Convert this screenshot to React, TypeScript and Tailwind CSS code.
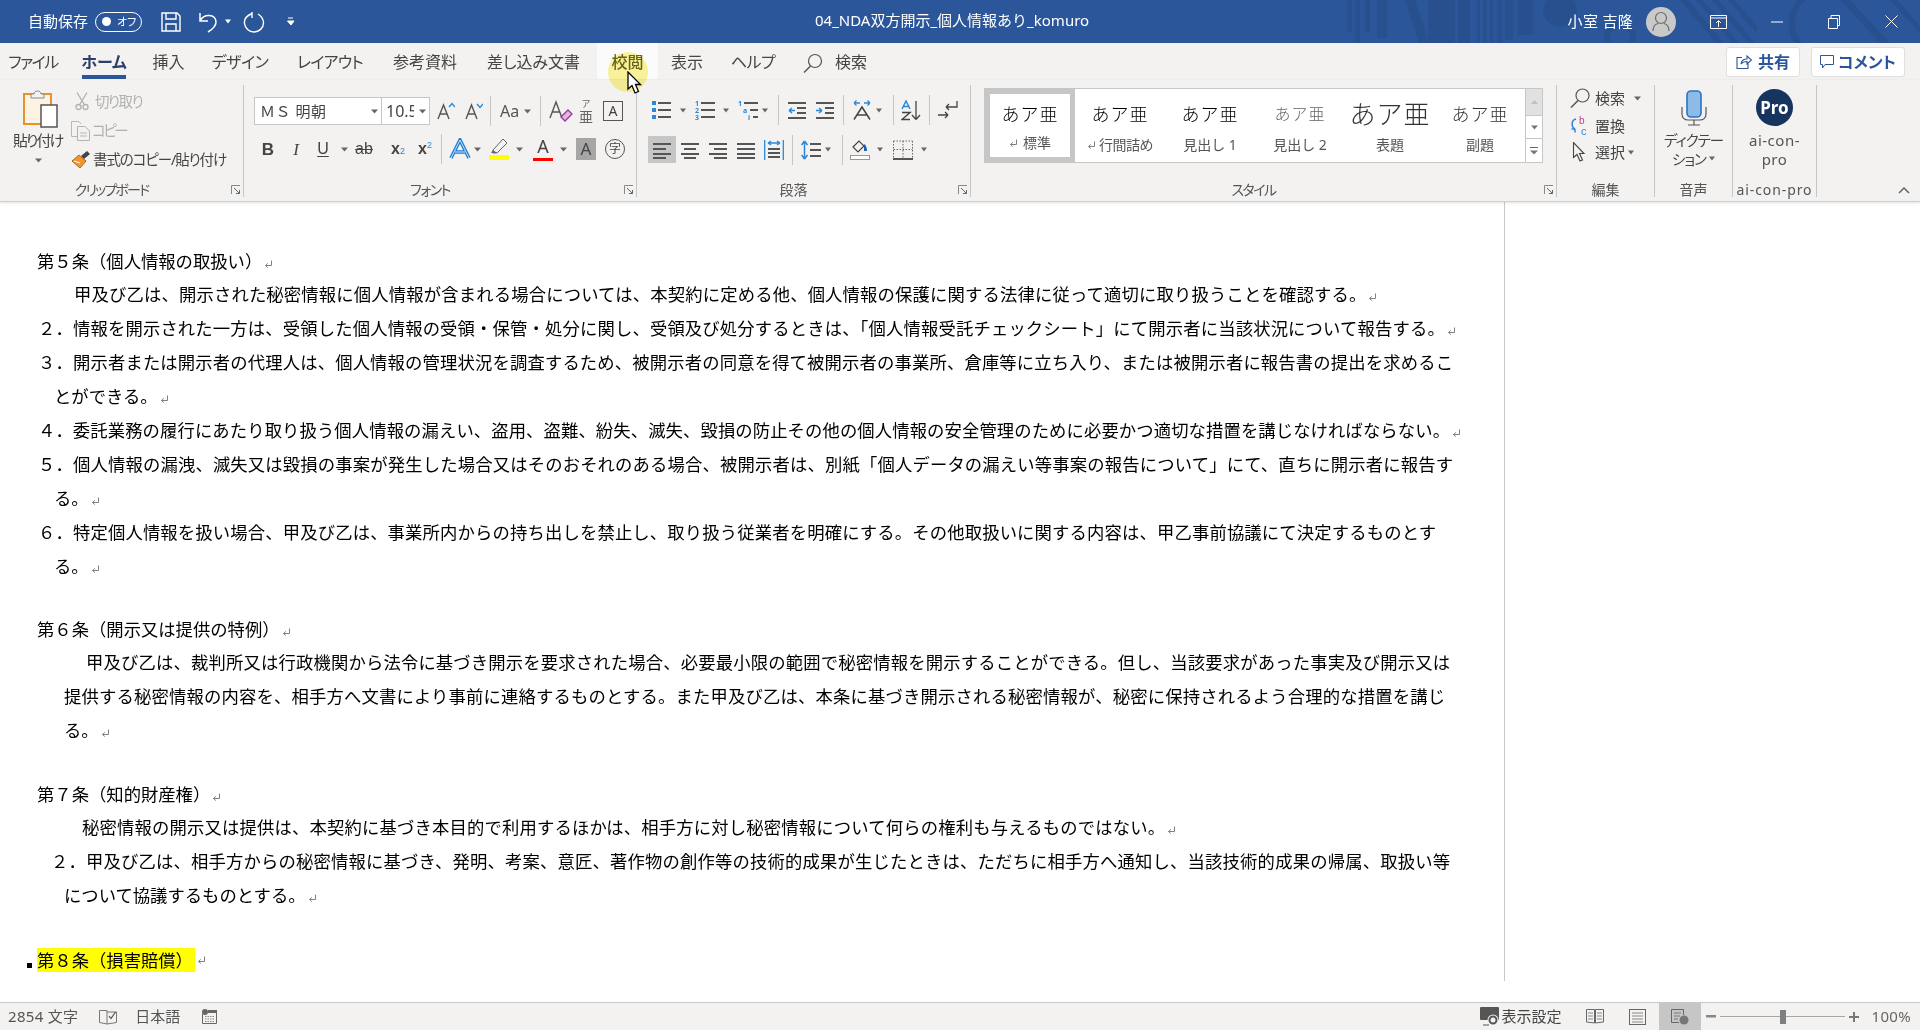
import React from "react";

const S = ({ w, h, children, className = "" }: { w: number; h: number; children?: React.ReactNode; className?: string }) => (
  <svg width={w} height={h} viewBox={`0 0 ${w} ${h}`} fill="none" className={"block shrink-0 " + className}>
    {children}
  </svg>
);
const Caret = ({ className = "", w = 8, c = "#666" }: { className?: string; w?: number; c?: string }) => (
  <S w={w} h={5} className={className}>
    <path d={`M0 0.5H${w}L${w / 2} 4.5Z`} fill={c} />
  </S>
);
const Sep = ({ className = "", h = 30 }: { className?: string; h?: number }) => (
  <S w={1} h={h} className={className}>
    <rect width={1} height={h} fill="#c8c6c4" />
  </S>
);
const Launcher = () => (
  <S w={10} h={10} className="self-center justify-self-end mr-[2px]">
    <path d="M0.5 9V0.5H9" stroke="#8a8886" />
    <path d="M3 3L8.5 8.5M5 8.5H8.5V5" stroke="#666" />
  </S>
);
const Label = ({ children, launcher, cls = "" }: { children: React.ReactNode; launcher?: boolean; cls?: string }) => (
  <div className="h-[15px] grid grid-cols-[1fr_auto_1fr] items-center text-[14px] leading-none text-[#555]">
    <span />
    <span className={"whitespace-nowrap " + (launcher ? "-translate-x-[10px] " : "") + cls}>{children}</span>
    {launcher ? <Launcher /> : <span />}
  </div>
);
const Mark = ({ className = "ml-[2px]" }: { className?: string }) => (
  <S w={9} h={9} className={"inline-block align-[-1px] " + className}>
    <path d="M7.5 0.5V5.5H1.5M1.5 5.5L3.8 3.4M1.5 5.5L3.8 7.6" stroke="#808080" strokeWidth="1" />
  </S>
);
const LineSet = ({ w, rows, c = "#555", t = 2 }: { w: number; rows: [number, number, number][]; c?: string; t?: number }) => (
  <S w={w} h={20}>
    {rows.map(([x, y, l], i) => (
      <rect key={i} x={x} y={y} width={l} height={t} fill={c} />
    ))}
  </S>
);

const Title = () => (
  <div className="relative h-[43px] shrink-0 bg-[#2b579a] flex items-center text-white overflow-hidden">
    <svg width={620} height={43} viewBox="0 0 620 43" className="absolute right-0 top-0" fill="#28508f">
      <rect x={47} width={5} height={32} />
      <rect x={55} width={5} height={43} />
      <rect x={65} width={5} height={32} />
      <rect x={77} width={10} height={38} />
      <path d="M105 0h10l14 43h-10z" />
      <rect x={128} width={27} height={43} />
      <rect x={158} width={12} height={43} />
      <rect x={177} width={3} height={43} />
      <rect x={183} width={4} height={43} />
      <rect x={190} width={3} height={43} />
      <rect x={197} width={5} height={43} />
      <rect x={205} width={8} height={40} />
      <rect x={218} width={15} height={35} />
      <circle cx={260} cy={10} r={17} />
      <circle cx={320} cy={37} r={13} stroke="#28508f" strokeWidth={6} fill="none" />
      <path d="M380 0h8l36 43h-8zM396 0h7l36 43h-7zM412 0h7l36 43h-7zM428 0h7l22 26v8z" />
      <path d="M494 43a36 36 0 0 1 4-43h8a30 30 0 0 0-4 43zM590 0h8l22 26v8zM540 0h10l40 43h-10z" />
    </svg>
    <span className="ml-[28px] text-[15px] leading-none whitespace-nowrap relative">自動保存</span>
    <div className="relative ml-[7px] w-[47px] h-[20px] rounded-full border border-white flex items-center">
      <span className="ml-[6px] w-[9px] h-[9px] rounded-full bg-white" />
      <span className="ml-[6px] text-[11px] leading-none whitespace-nowrap [font-feature-settings:'palt']">オフ</span>
    </div>
    <S w={20} h={20} className="ml-[19px] relative">
      <path d="M1 1H16L19 4V19H1ZM5 1V7H15V1M5 19V12H15V19" stroke="#fff" strokeWidth="1.4" />
    </S>
    <S w={24} h={22} className="ml-[17px] relative">
      <path d="M2 2V10H10M2 10C6 2 18 3 18 11C18 15 15 18 10 21" stroke="#fff" strokeWidth="1.5" />
    </S>
    <Caret w={6} c="#fff" className="ml-[3px] relative" />
    <S w={22} h={22} className="ml-[12px] relative">
      <path d="M9 2.5C3 5 1 9 1.5 12.5C2 17 6 21 11 21C16 21 20.500 17 20.500 12C20.500 8 18 5 15 3M9 1V7" stroke="#fff" strokeWidth="1.4" />
    </S>
    <S w={8} h={9} className="ml-[22px] relative">
      <path d="M1 1H6M0.500 4H7L4 8Z" stroke="#fff" strokeWidth="1" fill="#fff" />
    </S>
    <span className="absolute left-[815px] top-[11px] text-[15px] leading-[18px] whitespace-nowrap">04_NDA双方開示_個人情報あり_komuro</span>
    <div className="relative ml-auto flex items-center">
      <span className="text-[15px] leading-none whitespace-nowrap tracking-[0.3px]">小室 吉隆</span>
      <div className="ml-[13px] w-[30px] h-[30px] rounded-full bg-[#c9c9c9] flex items-center justify-center">
        <S w={20} h={22}>
          <circle cx={10} cy={7} r={5.500} stroke="#6a6a6a" strokeWidth="1.2" />
          <path d="M2 20C2 15 5 13 7 12.500M18 20C18 15 15 13 13 12.500" stroke="#6a6a6a" strokeWidth="1.2" />
        </S>
      </div>
      <S w={17} h={14} className="ml-[34px]">
        <path d="M0.500 3H16.500M0.500 0.500H16.500V13.500H0.500ZM8.500 12V6M6 8L8.500 5.500L11 8" stroke="#fff" />
      </S>
      <S w={12} h={2} className="ml-[44px]">
        <rect y={0.500} width={12} height={1} fill="#fff" />
      </S>
      <S w={12} h={14} className="ml-[45px]">
        <path d="M0.500 3.500H9.500V13.500H0.500ZM3 3.500V0.500H11.500V10.500H9.500" stroke="#fff" />
      </S>
      <S w={13} h={13} className="ml-[45px] mr-[22px]">
        <path d="M0.500 0.500L12.500 12.500M12.500 0.500L0.500 12.500" stroke="#fff" />
      </S>
    </div>
  </div>
);

const tabText = "text-[16px] leading-none text-[#444] whitespace-nowrap [font-feature-settings:'palt'] h-[38px] flex items-center justify-center";

const Tabs = () => (
  <div className="h-[37px] shrink-0 bg-[#f3f2f1] flex items-start">
    <div className={tabText + " ml-[10px] w-[46px] tracking-[-1.5px]"}>ファイル</div>
    <div className={tabText + " ml-[26px] w-[44px] !h-[36px] font-bold !text-[#2b3f6b] border-b-[4px] border-[#2b579a] pt-[6px]"}>ホーム</div>
    <div className={tabText + " ml-[26px] w-[33px]"}>挿入</div>
    <div className={tabText + " ml-[28px] w-[54px] tracking-[-0.5px]"}>デザイン</div>
    <div className={tabText + " ml-[31px] w-[64px] tracking-[-0.8px]"}>レイアウト</div>
    <div className={tabText + " ml-[29px] w-[68px]"}>参考資料</div>
    <div className={tabText + " ml-[27px] w-[95px]"}>差し込み文書</div>
    <div className={tabText + " ml-[16px] w-[61px] !h-[36px] pt-[2px] bg-[#fbfbfb] font-medium !text-[#666622]"}>校閲</div>
    <div className={tabText + " ml-[12px] w-[34px]"}>表示</div>
    <div className={tabText + " ml-[27px] w-[44px] tracking-[-0.5px]"}>ヘルプ</div>
    <S w={20} h={20} className="ml-[28px] mt-[10px]">
      <circle cx={12} cy={8} r={6.500} stroke="#555" strokeWidth="1.2" />
      <path d="M7.500 13L1 19.500" stroke="#555" strokeWidth="1.4" />
    </S>
    <div className={tabText + " ml-[11px] w-[34px]"}>検索</div>
    <div className="ml-auto mt-[4px] flex">
      <div className="w-[74px] h-[30px] rounded-[3px] bg-white border border-[#e1dfdd] flex items-center justify-center gap-[6px] text-[16px] font-bold leading-none text-[#2b579a] whitespace-nowrap">
        <S w={16} h={16}>
          <path d="M6 3.500H1V14.500H12V9.500M5 10C5.500 6.500 8 5 11 5V2L15.500 6L11 10V7.500C8.500 7.500 6.500 8 5 10Z" stroke="#2b579a" strokeWidth="1.1" />
        </S>
        共有
      </div>
      <div className="ml-[11px] mr-[15px] w-[94px] h-[30px] rounded-[3px] bg-white border border-[#e1dfdd] flex items-center justify-center gap-[4px] text-[16px] font-bold leading-none text-[#2b579a] whitespace-nowrap [font-feature-settings:'palt']">
        <S w={14} h={14}>
          <path d="M0.500 0.500H13.500V9.500H5L2.500 13V9.500H0.500Z" stroke="#2b579a" />
        </S>
        コメント
      </div>
    </div>
  </div>
);

const rb = "text-[#444] [font-feature-settings:'palt'] leading-none whitespace-nowrap";

const Clipboard = () => (
  <section className="w-[244px] h-[112px] shrink-0 border-r border-[#c8c6c4] flex flex-col">
    <div className="h-[97px] flex">
      <div className="w-[63px] ml-[13px] shrink-0 flex flex-col items-start -mr-[2px]">
        <S w={36} h={39} className="ml-[10px] mt-[4px]">
          <rect x={1} y={5} width={27} height={30} fill="#fdf3e2" stroke="#e8912d" strokeWidth="2" />
          <path d="M8 5H11C11 1 18 1 18 5H21V9H8Z" fill="#f3f2f1" stroke="#8a8a8a" />
          <rect x={18} y={16} width={16} height={22} fill="#fff" stroke="#555" strokeWidth="1.500" />
        </S>
        <span className={rb + " text-[15px] mt-[5px] tracking-[-2px]"}>貼り付け</span>
        <Caret w={7} className="ml-[22px] mt-[10px]" />
      </div>
      <div className="flex flex-col ml-[-4px]">
        <div className="h-[29px] mt-[2px] flex items-center ml-[4px]">
          <S w={14} h={19} className="ml-[1px]">
            <path d="M2 0.500L9 12M12 0.500L5 12" stroke="#b1b1b1" strokeWidth="1.300" />
            <circle cx={3.500} cy={15} r={2.500} stroke="#b1b1b1" strokeWidth="1.300" />
            <circle cx={10.500} cy={15} r={2.500} stroke="#b1b1b1" strokeWidth="1.300" />
          </S>
          <span className={rb + " !text-[#b1b1b1] text-[14.5px] ml-[6px] tracking-[-1.5px]"}>切り取り</span>
        </div>
        <div className="h-[29px] flex items-center">
          <S w={20} h={20} className="ml-[1px]">
            <path d="M6 15.500H0.500V0.500H8L10 3" stroke="#b8b8b8" />
            <path d="M6.500 5.500H14L18.500 10V19.500H6.500Z" stroke="#b1b1b1" />
            <path d="M9 12H16M9 15H16" stroke="#b8b8b8" />
          </S>
          <span className={rb + " !text-[#b1b1b1] text-[14.5px] ml-[1px] tracking-[-2.5px]"}>コピー</span>
        </div>
        <div className="h-[29px] flex items-center">
          <S w={20} h={20} className="ml-[1px]">
            <path d="M1 11L8 5L15 11L9 18Z" fill="#f0962e" stroke="#b8650f" />
            <path d="M3 11L9 13" stroke="#fff" />
            <path d="M10 6L16 1L19 4L13 9Z" fill="#444" />
          </S>
          <span className={rb + " text-[14.5px] ml-[2px] tracking-[-1.1px]"}>書式のコピー/貼り付け</span>
        </div>
      </div>
    </div>
    <Label launcher cls="[font-feature-settings:'palt'] tracking-[-1.8px]">クリップボード</Label>
  </section>
);

const A = ({ c = "#444", s = 19 }: { c?: string; s?: number }) => (
  <span className="font-['Noto_Sans',sans-serif] leading-[1.1]" style={{ fontSize: s, color: c }}>
    A
  </span>
);

const box20 = "w-[20px] h-[24px] shrink-0 flex items-center justify-center font-['Liberation_Sans',sans-serif] text-[#444] leading-none";

const Font = () => (
  <section className="w-[393px] h-[112px] shrink-0 border-r border-[#c8c6c4] flex flex-col">
    <div className="h-[97px] flex flex-col">
      <div className="flex items-center mt-[12px] h-[28px]">
        <div className="ml-[10px] w-[128px] h-[28px] bg-white border border-[#c6c6c6] flex items-center">
          <span className="ml-[5px] text-[15px] text-[#444] leading-[18px] whitespace-nowrap tracking-[0.5px]">ＭＳ 明朝</span>
          <Caret w={7} className="ml-auto mr-[3px]" />
        </div>
        <div className="w-[48px] h-[28px] bg-white border border-l-0 border-[#c6c6c6] flex items-center">
          <span className="ml-[4px] w-[28px] overflow-hidden text-[16px] text-[#444] leading-[18px] whitespace-nowrap">10.5</span>
          <Caret w={7} className="ml-auto mr-[3px]" />
        </div>
        <S w={18} h={20} className="ml-[7px]">
          <path d="M1 18L6.500 4L12 18M3 13H10" stroke="#555" strokeWidth="1.400" />
          <path d="M12 6L15 2.500L18 6" stroke="#2b88d8" strokeWidth="1.400" />
        </S>
        <S w={18} h={20} className="ml-[10px]">
          <path d="M1 18L6.500 4L12 18M3 13H10" stroke="#555" strokeWidth="1.400" />
          <path d="M12 3L15 6.500L18 3" stroke="#2b88d8" strokeWidth="1.400" />
        </S>
        <Sep className="ml-[7px]" />
        <span className={"ml-[9px] w-[24px] text-[16px] text-[#555] leading-[20px] font-['Noto_Sans',sans-serif] whitespace-nowrap"}>Aa</span>
        <Caret w={7} className="ml-[0px]" />
        <Sep className="ml-[9px]" />
        <S w={24} h={22} className="ml-[8px]">
          <path d="M1 18L7 2L13 18M3.500 12H10.500" stroke="#555" strokeWidth="1.400" />
          <path d="M12 17L19 10L23 14L16 21Z" fill="#e8b4dc" stroke="#8a3fa0" strokeWidth="1.300" />
        </S>
        <div className="ml-[4px] w-[18px] flex flex-col items-center text-[#666]">
          <span className="text-[9px] leading-[11px]">ア</span>
          <span className="text-[14px] leading-[16px]">亜</span>
        </div>
        <div className="ml-[8px] w-[20px] h-[20px] border-[1.5px] border-[#555] flex items-center justify-center">
          <A s={14} />
        </div>
      </div>
      <div className="flex items-center mt-[11px] h-[26px]">
        <div className={box20 + " ml-[14px] text-[17px] font-bold"}>B</div>
        <div className={box20 + " ml-[8px] text-[17px] italic font-['Liberation_Serif',serif]"}>I</div>
        <div className={box20 + " ml-[7px] text-[16px] underline underline-offset-[2px]"}>U</div>
        <Caret w={7} className="ml-[8px]" />
        <div className={box20 + " ml-[4px] !w-[24px] text-[16px] line-through"}>ab</div>
        <div className={box20 + " ml-[12px] text-[16px] font-bold"}>
          x<sub className="text-[9px] font-normal text-[#2b88d8] align-[-4px]">2</sub>
        </div>
        <div className={box20 + " ml-[7px] text-[16px] font-bold"}>
          x<sup className="text-[9px] font-normal text-[#2b88d8] align-[6px]">2</sup>
        </div>
        <Sep className="ml-[6px]" />
        <S w={22} h={22} className="ml-[7px]">
          <path d="M2 20L11 2L20 20M6 14H16" stroke="#1a7dd1" strokeWidth="3.500" />
          <path d="M2 20L11 2L20 20M6 14H16" stroke="#cfe6f9" strokeWidth="1" />
        </S>
        <Caret w={7} className="ml-[3px]" />
        <S w={22} h={22} className="ml-[8px]">
          <path d="M4 12L14 1L18 5L8 15L4 15Z" stroke="#666" fill="#f3f2f1" />
          <path d="M4 12L2 15L6 15L8 15Z" fill="#666" />
          <rect y={17} width={20} height={5} fill="#ffff00" />
        </S>
        <Caret w={7} className="ml-[5px]" />
        <div className="ml-[10px] w-[20px] h-[24px] flex flex-col items-center justify-end">
          <A s={18} />
          <span className="w-[20px] h-[5px] bg-[#ff0000] mt-[1px]" />
        </div>
        <Caret w={7} className="ml-[7px]" />
        <div className="ml-[9px] w-[20px] h-[22px] bg-[#a6a6a6] flex items-center justify-center">
          <A s={17} />
        </div>
        <div className="ml-[9px] w-[20px] h-[20px] rounded-full border-[1.5px] border-[#555] flex items-center justify-center text-[12px] leading-none text-[#444]">字</div>
      </div>
    </div>
    <Label launcher cls="[font-feature-settings:'palt'] tracking-[-1.5px]">フォント</Label>
  </section>
);

const Blue = "#2b88d8";
const Para = () => (
  <section className="w-[334px] h-[112px] shrink-0 border-r border-[#c8c6c4] flex flex-col">
    <div className="h-[97px] flex flex-col">
      <div className="flex items-center mt-[15px] h-[20px]">
        <S w={19} h={20} className="ml-[15px]">
          <rect x={0} y={1} width={4} height={4} fill={Blue} />
          <rect x={0} y={8} width={4} height={4} fill={Blue} />
          <rect x={0} y={15} width={4} height={4} fill={Blue} />
          <rect x={6} y={2} width={13} height={2} fill="#555" />
          <rect x={6} y={9} width={13} height={2} fill="#555" />
          <rect x={6} y={16} width={13} height={2} fill="#555" />
        </S>
        <Caret w={6} className="ml-[9px]" />
        <S w={20} h={20} className="ml-[9px]">
          <text x={0} y={6} fontSize={7} fontWeight={700} fill={Blue}>1</text>
          <text x={0} y={13} fontSize={7} fontWeight={700} fill={Blue}>2</text>
          <text x={0} y={20} fontSize={7} fontWeight={700} fill={Blue}>3</text>
          <rect x={6} y={2} width={14} height={2} fill="#555" />
          <rect x={6} y={9} width={14} height={2} fill="#555" />
          <rect x={6} y={16} width={14} height={2} fill="#555" />
        </S>
        <Caret w={6} className="ml-[8px]" />
        <S w={20} h={20} className="ml-[9px]">
          <text x={0} y={6} fontSize={7} fontWeight={700} fill={Blue}>1</text>
          <text x={5} y={13} fontSize={7} fontWeight={700} fill={Blue}>a</text>
          <text x={10} y={20} fontSize={7} fontWeight={700} fill={Blue}>i</text>
          <rect x={6} y={2} width={14} height={2} fill="#555" />
          <rect x={12} y={9} width={8} height={2} fill="#555" />
          <rect x={15} y={16} width={5} height={2} fill="#555" />
        </S>
        <Caret w={6} className="ml-[4px]" />
        <Sep className="ml-[10px]" />
        <S w={18} h={20} className="ml-[9px]">
          <rect y={2} width={18} height={2} fill="#555" /><rect x={9} y={7} width={9} height={2} fill="#555" /><rect x={9} y={12} width={9} height={2} fill="#555" /><rect y={17} width={18} height={2} fill="#555" />
          <path d="M7 10.500H1M1 10.500L4 8M1 10.500L4 13" stroke={Blue} strokeWidth="1.500" />
        </S>
        <S w={18} h={20} className="ml-[10px]">
          <rect y={2} width={18} height={2} fill="#555" /><rect x={9} y={7} width={9} height={2} fill="#555" /><rect x={9} y={12} width={9} height={2} fill="#555" /><rect y={17} width={18} height={2} fill="#555" />
          <path d="M0 10.500H6M6 10.500L3 8M6 10.500L3 13" stroke={Blue} strokeWidth="1.500" />
        </S>
        <Sep className="ml-[9px]" />
        <S w={20} h={20} className="ml-[8px]">
          <path d="M2 19.500L10 7L18 19.500M5 15H15" stroke="#444" strokeWidth="1.500" />
          <path d="M8 3H2M2 3L4.500 0.500M2 3L4.500 5.500M12 3H18M18 3L15.500 0.500M18 3L15.500 5.500" stroke={Blue} strokeWidth="1.300" />
        </S>
        <Caret w={6} className="ml-[4px]" />
        <Sep className="ml-[11px]" />
        <S w={20} h={21} className="ml-[7px]">
          <path d="M1 9L5 1L9 9M2.500 6.500H7.500" stroke={Blue} strokeWidth="1.500" />
          <path d="M1 12.500H9L1 19.500H9" stroke="#444" strokeWidth="1.500" />
          <path d="M15 1V19M15 19.500L11 15M15 19.500L19 15" stroke="#444" strokeWidth="1.300" />
        </S>
        <Sep className="ml-[8px]" />
        <S w={20} h={20} className="ml-[8px]">
          <path d="M0 15H10M10 15L7 12M10 15L7 18" stroke="#444" strokeWidth="1.300" />
          <path d="M19 1V7H8M8 7L11 4M8 7L11 10" stroke="#444" strokeWidth="1.300" />
        </S>
      </div>
      <div className="flex items-center mt-[16px] h-[27px]">
        <div className="ml-[11px] w-[28px] h-[27px] bg-[#c6c6c6] flex items-center justify-center">
          <LineSet w={18} rows={[[0,3,18],[0,8,13],[0,13,18],[0,17,13]]} />
        </div>
        <div className="ml-[5px]"><LineSet w={18} rows={[[0,3,18],[3,8,12],[0,13,18],[3,17,12]]} /></div>
        <div className="ml-[10px]"><LineSet w={18} rows={[[0,3,18],[5,8,13],[0,13,18],[5,17,13]]} /></div>
        <div className="ml-[10px]"><LineSet w={18} rows={[[0,3,18],[0,8,18],[0,13,18],[0,17,18]]} /></div>
        <S w={20} h={20} className="ml-[9px]">
          <path d="M0.700 0V20M19.300 0V20M4 3H16M4 3L7 1M4 3L7 5M16 3L13 1M16 3L13 5" stroke={Blue} strokeWidth="1.300" />
          <rect x={4} y={8} width={12} height={2} fill="#555" /><rect x={4} y={12} width={12} height={2} fill="#555" /><rect x={4} y={16} width={12} height={2} fill="#555" />
        </S>
        <Sep className="ml-[8px]" />
        <S w={20} h={20} className="ml-[8px]">
          <path d="M3.500 1V19M3.500 1L0.500 5M3.500 1L6.500 5M3.500 19L0.500 15M3.500 19L6.500 15" stroke={Blue} strokeWidth="1.500" />
          <rect x={9} y={3} width={11} height={2} fill="#555" /><rect x={9} y={9} width={11} height={2} fill="#555" /><rect x={9} y={15} width={11} height={2} fill="#555" />
        </S>
        <Caret w={6} className="ml-[4px]" />
        <Sep className="ml-[11px]" />
        <S w={20} h={21} className="ml-[7px]">
          <path d="M3 8L9 2L14 7L8 13Z" stroke="#444" strokeWidth="1.200" fill="#f3f2f1" />
          <path d="M14 5C16 6 17 9 17 12H14Z" fill="#1f5fa8" />
          <rect x={0.500} y={16.500} width={19} height={4} fill="#fff" stroke="#999" />
        </S>
        <Caret w={6} className="ml-[7px]" />
        <S w={20} h={20} className="ml-[10px]">
          <path d="M0.500 1H19.500M0.500 1V18M19.500 1V18M10 1V18M0.500 9.500H19.500" stroke="#666" strokeDasharray="1.500 1.500" />
          <rect y={18} width={20} height={2} fill="#555" />
        </S>
        <Caret w={6} className="ml-[8px]" />
      </div>
    </div>
    <Label launcher>段落</Label>
  </section>
);

const styleItems: [string, string, string, string][] = [
  ["行間詰め", "text-[18px]", "#000", "mark"],
  ["見出し 1", "text-[18px]", "#000", ""],
  ["見出し 2", "text-[16px]", "#666", ""],
  ["表題", "text-[26px]", "#333", ""],
  ["副題", "text-[18px]", "#333", ""],
];

const Styles = () => (
  <section className="w-[586px] h-[112px] shrink-0 border-r border-[#c8c6c4] flex flex-col">
    <div className="h-[97px]">
      <div className="ml-[13px] mt-[3px] w-[559px] h-[75px] bg-white border border-[#c6c6c6] flex">
        <div className="w-[90px] h-[73px] border-[5px] border-[#c6c6c6] flex flex-col items-center shrink-0">
          <span className="text-[18px] font-light leading-none text-black mt-[11px] whitespace-nowrap tracking-[1px]">あア亜</span>
          <span className="flex items-center text-[14px] leading-none text-[#555] mt-[13px] whitespace-nowrap">
            <Mark className="ml-[0px]" />
            <span className="ml-[5px]">標準</span>
          </span>
        </div>
        {styleItems.map(([cap, size, col, mk]) => (
          <div key={cap} className="w-[90px] h-[73px] shrink-0 flex flex-col items-center">
            <div className="h-[50px] flex items-center">
              <span className={size + " font-light leading-none whitespace-nowrap tracking-[1px]"} style={{ color: col }}>
                あア亜
              </span>
            </div>
            <span className="flex items-center text-[14px] leading-none text-[#555] mt-[-1px] whitespace-nowrap">
              {mk ? <Mark className="ml-[0px]" /> : null}
              <span className={mk ? "ml-[3px] tracking-[-0.5px]" : ""}>{cap}</span>
            </span>
          </div>
        ))}
        <div className="ml-auto w-[17px] border-l border-[#c6c6c6] flex flex-col">
          <div className="h-[26px] bg-[#e1e1e1] flex items-center justify-center"><S w={7} h={4}><path d="M0 4H7L3.500 0Z" fill="#c0c0c0" /></S></div>
          <div className="h-[24px] border-t border-b border-[#c6c6c6] flex items-center justify-center"><Caret w={7} c="#777" /></div>
          <div className="flex-1 flex flex-col items-center justify-center gap-[2px]">
            <span className="w-[8px] h-[1px] bg-[#666]" />
            <Caret w={8} c="#777" />
          </div>
        </div>
      </div>
    </div>
    <Label launcher cls="[font-feature-settings:'palt'] tracking-[-1.5px]">スタイル</Label>
  </section>
);

const editText = rb + " text-[15px] ml-[5px] w-[30px] [font-feature-settings:normal]";
const Edit = () => (
  <section className="w-[98px] h-[112px] shrink-0 border-r border-[#c8c6c4] flex flex-col">
    <div className="h-[97px] pl-[13px]">
      <div className="h-[26px] flex items-center">
        <S w={20} h={20}>
          <circle cx={12.500} cy={7.500} r={6.500} stroke="#555" strokeWidth="1.200" />
          <path d="M8 12.500L1 19.500" stroke="#555" strokeWidth="1.500" />
        </S>
        <span className={editText}>検索</span>
        <Caret w={7} className="ml-[9px]" />
      </div>
      <div className="h-[26px] mt-[2px] flex items-center">
        <S w={20} h={20}>
          <text x={9} y={8} fontSize={10} fontFamily="Liberation Sans" fill="#c43e87">b</text>
          <text x={11} y={19} fontSize={11} fontFamily="Liberation Sans" fill="#2b88d8">c</text>
          <path d="M6 3C1 4 1 11 5 13M5 13L1.500 13M5 13V16.500" stroke="#2b88d8" strokeWidth="1.500" />
        </S>
        <span className={editText}>置換</span>
      </div>
      <div className="h-[26px] flex items-center">
        <S w={20} h={20}>
          <path d="M3.500 0.500V15.500L7 12.500L10 19L12.500 18L9.500 11.500H14Z" stroke="#444" strokeWidth="1.100" fill="#f3f2f1" />
        </S>
        <span className={editText}>選択</span>
        <Caret w={6} className="ml-[3px]" />
      </div>
    </div>
    <Label>編集</Label>
  </section>
);

const Voice = () => (
  <section className="w-[78px] h-[112px] shrink-0 border-r border-[#c8c6c4] flex flex-col">
    <div className="h-[97px] flex flex-col items-center">
      <S w={26} h={36} className="mt-[5px]">
        <rect x={6} y={1} width={14} height={26} rx={4} fill="#8cbbe8" stroke="#2b74c4" strokeWidth="1.600" />
        <path d="M1 17V24C1 28 4 30 7 30H19C22 30 25 28 25 24V17M13 30V35M7 35H19" stroke="#555" strokeWidth="1.200" />
      </S>
      <span className={rb + " text-[14.5px] mt-[7px] tracking-[-1px]"}>ディクテー</span>
      <span className={rb + " text-[14.5px] mt-[4px] flex items-center tracking-[-1px]"}>
        ション
        <Caret w={6} className="ml-[3px]" />
      </span>
    </div>
    <Label>音声</Label>
  </section>
);

const Pro = () => (
  <section className="w-[84px] h-[112px] shrink-0 border-r border-[#c8c6c4] flex flex-col">
    <div className="h-[97px] flex flex-col items-center">
      <div className="mt-[4px] w-[37px] h-[37px] rounded-full bg-[#17345f] flex items-center justify-center text-white font-bold text-[17px] leading-none font-['Noto_Sans',sans-serif]">Pro</div>
      <span className={rb + " text-[15px] mt-[7px] tracking-[0.5px] font-['Noto_Sans',sans-serif] !text-[#555]"}>ai-con-</span>
      <span className={rb + " text-[15px] mt-[4px] tracking-[0.5px] font-['Noto_Sans',sans-serif] !text-[#555]"}>pro</span>
    </div>
    <div className="h-[15px] flex items-center justify-center text-[14px] leading-none text-[#555] tracking-[0.9px] whitespace-nowrap font-['Noto_Sans',sans-serif]">ai-con-pro</div>
  </section>
);

const Ribbon = () => (
  <div className="h-[122px] shrink-0 bg-[#f3f2f1] flex items-start pt-[5px] border-b border-[#d2d0ce] shadow-[0_1px_3px_rgba(0,0,0,0.12)] relative z-10">
    <Clipboard />
    <Font />
    <Para />
    <Styles />
    <Edit />
    <Voice />
    <Pro />
    <S w={12} h={7} className="ml-[81px] mt-[102px]">
      <path d="M1 6L6 1L11 6" stroke="#666" strokeWidth="1.500" />
    </S>
  </div>
);

type Line = { t: string; box: string; mark?: boolean; h?: string };
const lines: Line[] = [
  { t: "第５条（個人情報の取扱い）", box: "ml-[37px]", mark: true, h: "h-[33px]" },
  { t: "甲及び乙は、開示された秘密情報に個人情報が含まれる場合については、本契約に定める他、個人情報の保護に関する法律に従って適切に取り扱うことを確認する。", box: "ml-[74px] tracking-[0.16px]", mark: true },
  { t: "２．情報を開示された一方は、受領した個人情報の受領・保管・処分に関し、受領及び処分するときは、「個人情報受託チェックシート」にて開示者に当該状況について報告する。", box: "ml-[38px] tracking-[0.155px]", mark: true },
  { t: "３．開示者または開示者の代理人は、個人情報の管理状況を調査するため、被開示者の同意を得て被開示者の事業所、倉庫等に立ち入り、または被開示者に報告書の提出を求めるこ", box: "ml-[38px] w-[1415px] [text-align-last:justify]" },
  { t: "とができる。", box: "ml-[54px]", mark: true },
  { t: "４．委託業務の履行にあたり取り扱う個人情報の漏えい、盗用、盗難、紛失、滅失、毀損の防止その他の個人情報の安全管理のために必要かつ適切な措置を講じなければならない。", box: "ml-[38px] tracking-[0.105px]", mark: true },
  { t: "５．個人情報の漏洩、滅失又は毀損の事案が発生した場合又はそのおそれのある場合、被開示者は、別紙「個人データの漏えい等事案の報告について」にて、直ちに開示者に報告す", box: "ml-[38px] w-[1415px] [text-align-last:justify]" },
  { t: "る。", box: "ml-[54px]", mark: true },
  { t: "６．特定個人情報を扱い場合、甲及び乙は、事業所内からの持ち出しを禁止し、取り扱う従業者を明確にする。その他取扱いに関する内容は、甲乙事前協議にて決定するものとす", box: "ml-[38px] w-[1398px] [text-align-last:justify]" },
  { t: "る。", box: "ml-[54px]", mark: true },
  { t: "", box: "", h: "h-[29px]" },
  { t: "第６条（開示又は提供の特例）", box: "ml-[37px]", mark: true, h: "h-[33px]" },
  { t: "甲及び乙は、裁判所又は行政機関から法令に基づき開示を要求された場合、必要最小限の範囲で秘密情報を開示することができる。但し、当該要求があった事実及び開示又は", box: "ml-[86px] w-[1364px] [text-align-last:justify]" },
  { t: "提供する秘密情報の内容を、相手方へ文書により事前に連絡するものとする。また甲及び乙は、本条に基づき開示される秘密情報が、秘密に保持されるよう合理的な措置を講じ", box: "ml-[64px] w-[1381px] [text-align-last:justify]" },
  { t: "る。", box: "ml-[64px]", mark: true },
  { t: "", box: "", h: "h-[30px]" },
  { t: "第７条（知的財産権）", box: "ml-[37px]", mark: true, h: "h-[33px]" },
  { t: "秘密情報の開示又は提供は、本契約に基づき本目的で利用するほかは、相手方に対し秘密情報について何らの権利も与えるものではない。", box: "ml-[82px] tracking-[0.17px]", mark: true },
  { t: "２．甲及び乙は、相手方からの秘密情報に基づき、発明、考案、意匠、著作物の創作等の技術的成果が生じたときは、ただちに相手方へ通知し、当該技術的成果の帰属、取扱い等", box: "ml-[51px] w-[1399px] [text-align-last:justify]" },
  { t: "について協議するものとする。", box: "ml-[64px]", mark: true },
];

const Doc = () => (
  <main className="h-[800px] shrink-0 bg-white overflow-hidden">
    <div className="w-[1505px] h-[779px] border-r border-[#c8c8c8] pt-[42px] text-[17.33px] text-black font-['Noto_Sans_CJK_JP',sans-serif] leading-none">
      {lines.map((l, i) => (
        <div key={i} className={(l.h ?? "h-[34px]") + " flex items-center whitespace-nowrap"}>
          {l.t ? (
            <div className={l.box}>
              {l.t}
              {l.mark ? <Mark /> : null}
            </div>
          ) : null}
        </div>
      ))}
      <div className="h-[34px] mt-[31px] flex items-center">
        <span className="ml-[27px] w-[5px] h-[5px] bg-black mt-[10px]" />
        <span className="ml-[5px] w-[158px] h-[24px] bg-[#ffff00] flex items-center">第８条（損害賠償）</span>
        <Mark />
      </div>
    </div>
  </main>
);

const Status = () => (
  <footer className="h-[28px] shrink-0 bg-[#f3f2f1] border-t border-[#c8c8c8] flex items-center text-[15px] leading-none text-[#555] whitespace-nowrap">
    <span className="ml-[8px] tracking-[0.3px]">2854 文字</span>
    <S w={18} h={16} className="ml-[21px]">
      <path d="M0.500 1.500H8V15L0.500 13.500ZM8 3H17.500V13.500L8 15" stroke="#777" />
      <path d="M10 7L12 9.500L16.500 3" stroke="#555" strokeWidth="1.200" />
    </S>
    <span className="ml-[18px]">日本語</span>
    <S w={15} h={15} className="ml-[22px]">
      <circle cx={3} cy={3} r={3} fill="#666" />
      <path d="M0.500 5V14.500H14.500V1.500H6" stroke="#666" />
      <rect x={6} y={1} width={9} height={3} fill="#666" />
      <path d="M3 7.500H12.500M3 10H12.500M3 12.500H12.500" stroke="#888" strokeDasharray="1.500 1" />
    </S>
    <div className="ml-auto flex items-center h-full">
      <S w={20} h={19}>
        <rect width={19} height={13} rx={1} fill="#555" />
        <circle cx={13} cy={13} r={5.500} fill="#f3f2f1" />
        <circle cx={13} cy={13} r={3.500} stroke="#555" strokeWidth="2" />
        <path d="M3 18H9" stroke="#555" />
      </S>
      <span className="ml-[2px] text-[#444]">表示設定</span>
      <S w={18} h={15} className="ml-[24px]">
        <path d="M0.500 0.500H8.500V14L0.500 13ZM9.500 14V0.500H17.500V13Z" stroke="#666" />
        <path d="M2 4H7M2 7H7M2 10H7M11 4H16M11 7H16M11 10H16" stroke="#888" />
      </S>
      <S w={17} h={16} className="ml-[25px]">
        <rect x={0.500} y={0.500} width={16} height={15} stroke="#666" />
        <path d="M3 4H14M3 7H14M3 10H14M3 13H14" stroke="#888" />
      </S>
      <div className="ml-[13px] w-[42px] h-full bg-[#c6c6c6] flex items-center justify-center">
        <S w={18} h={16}>
          <path d="M0.500 0.500H12.500M0.500 0.500V13.500H8M12.500 0.500V6" stroke="#666" />
          <path d="M3 4H10M3 7H9M3 10H7" stroke="#777" />
          <circle cx={13} cy={11} r={4.500} fill="#777" />
        </S>
      </div>
      <S w={10} h={3} className="ml-[5px]"><rect width={10} height={2.500} fill="#888" /></S>
      <div className="ml-[4px] w-[125px] h-[14px] relative flex items-center">
        <span className="w-full h-[1px] bg-[#a6a6a6]" />
        <span className="absolute left-[60px] top-0 w-[6px] h-[14px] bg-[#808080]" />
      </div>
      <S w={10} h={10} className="ml-[4px]"><path d="M0 5H10M5 0V10" stroke="#777" strokeWidth="2" /></S>
      <span className="ml-[13px] mr-[9px] font-['Noto_Sans',sans-serif] text-[#666] tracking-[0.3px]">100%</span>
    </div>
  </footer>
);

export default function App() {
  return (
    <div className="relative w-[1920px] h-[1030px] overflow-hidden flex flex-col bg-white font-['Noto_Sans','Noto_Sans_CJK_JP',sans-serif]">
      <Title />
      <Tabs />
      <Ribbon />
      <Doc />
      <Status />
      <span className="absolute left-[608px] top-[52px] w-[40px] h-[40px] rounded-full bg-[#fdf59c] mix-blend-multiply z-20" />
      <svg width={18} height={24} viewBox="0 0 18 24" className="absolute left-[627px] top-[71px] z-20">
        <path d="M1 1V18L5 14.500L8 22L11.500 20.500L8.500 13.500H13.500Z" fill="#fff" stroke="#000" strokeWidth="1.300" />
      </svg>
    </div>
  );
}
